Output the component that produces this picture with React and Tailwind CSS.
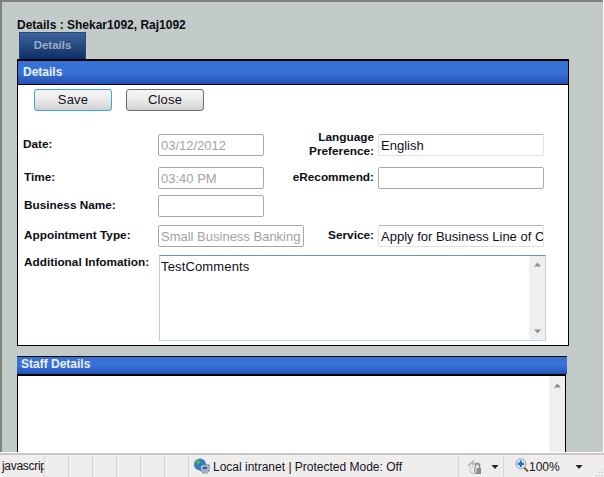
import React from "react";

const font = { fontFamily: '"Liberation Sans", Arial, sans-serif' };

function Arrow({ dir }) {
  return (
    <svg width="9" height="5" viewBox="0 0 9 5" className="block">
      <path d={dir === "up" ? "M4.5 0.5L8 4.5H1Z" : "M1 0.5H8L4.5 4.5Z"} fill="#8f8f8f" />
    </svg>
  );
}

function Scrollbar() {
  return (
    <div className="w-[16px] h-full bg-[#efefef] flex flex-col items-center justify-between pt-[6px] pb-[6px] shrink-0">
      <Arrow dir="up" />
      <Arrow dir="down" />
    </div>
  );
}

function Field({ value = "", disabled, w = "w-[106px]", light }) {
  return (
    <div
      className={`${w} h-[22px] rounded-[2px] border overflow-hidden whitespace-nowrap pl-[2px] pt-[1px] text-[13px] leading-[20px] bg-white shrink-0 ${
        disabled
          ? "border-[#a8a8a8] text-[#a3a3a3]"
          : light
            ? "border-[#b4b4b4] border-b-[#dfe3e8] border-r-[#dfe3e8] border-l-[#dfe3e8] text-[#10101a]"
            : "border-[#aaaaaa] text-[#10101a]"
      }`}
    >
      {value}
    </div>
  );
}

function Label({ children, className = "" }) {
  return <div className={`text-[11.8px] leading-[14px] font-bold text-[#0c0c14] mb-[2px] ${className}`}>{children}</div>;
}

function Btn({ children, focus }) {
  return (
    <div
      className={`w-[78px] h-[22px] rounded-[3px] border flex items-center justify-center text-[13px] tracking-[0.2px] text-[#111] bg-gradient-to-b from-[#f4f4f4] via-[#ebebeb] to-[#cfcfcf] ${
        focus ? "border-[#3aa8cf]" : "border-[#6f6f6f]"
      }`}
    >
      {children}
    </div>
  );
}

function Row({ mt = "", left, leftClass = "", field, right, rightW = "w-[114px]", rightField }) {
  return (
    <div className={`flex items-center ${mt}`}>
      <div className="w-[140px] shrink-0 pl-[6px]">
        <Label className={leftClass}>{left}</Label>
      </div>
      {field}
      {right !== undefined && (
        <>
          <div className={`${rightW} shrink-0 text-right pr-[4px]`}>
            <Label>{right}</Label>
          </div>
          {rightField}
        </>
      )}
    </div>
  );
}

export default function App() {
  return (
    <div className="w-[604px] h-[477px] overflow-hidden bg-white flex flex-col" style={font}>
      <div className="h-[452px] shrink-0 overflow-hidden bg-[#c2cbc7] border-t-2 border-l-2 border-[#808080] mr-[1px] pl-[15px] pr-[34px] flex flex-col">
        <div className="mt-[16px] h-[14px] text-[12px] leading-[15px] font-bold text-[#0c0c14] shrink-0">Details : Shekar1092, Raj1092</div>

        <div className="ml-[2px] w-[67px] h-[27px] border border-[#244a80] border-b-0 bg-gradient-to-b from-[#3f639b] to-[#0b2f66] flex items-center justify-center text-[11.5px] font-bold text-[#9cadc8] shrink-0">
          Details
        </div>

        <div className="w-[552px] h-[287px] shrink-0 border border-t-2 border-black bg-white flex flex-col">
          <div className="h-[23px] shrink-0 pl-[5px] bg-gradient-to-b from-[#3570d4] via-[#3872d6] to-[#2450b6] text-[12px] leading-[23px] font-bold text-[#e8f0fb]">
            Details
          </div>
          <div className="h-px bg-black shrink-0" />
          <div className="flex gap-[14px] pl-[16px] mt-[4px] shrink-0">
            <Btn focus>Save</Btn>
            <Btn>Close</Btn>
          </div>
          <div className="shrink-0 pt-[19px]">
            <Row
              left="Date:"
              leftClass="-ml-px"
              field={<Field value="03/12/2012" disabled />}
              right={<>Language<br />Preference:</>}
              rightField={<Field value="English" w="w-[166px]" light />}
            />
            <Row mt="mt-[7px]" left="Time:" field={<Field value="03:40 PM" disabled />} right="eRecommend:" rightField={<Field w="w-[166px]" />} />
            <Row mt="mt-[6px]" left="Business Name:" field={<Field />} />
            <Row
              mt="mt-[8px]"
              left="Appointment Type:"
              field={<Field value="Small Business Banking" disabled w="w-[146px]" />}
              right="Service:"
              rightW="w-[74px]"
              rightField={<Field value="Apply for Business Line of Credit" w="w-[166px]" light />}
            />
            <div className="flex items-start mt-[8px]">
              <div className="w-[141px] shrink-0 pl-[6px]">
                <Label>Additional Infomation:</Label>
              </div>
              <div className="w-[387px] h-[86px] border border-[#bcd6ea] border-t-[#6b97bd] border-l-[#b5cfe4] flex justify-between bg-white">
                <div className="pl-[1px] pt-[3px] text-[13px] leading-[16px] tracking-[0.15px] text-[#10101a]">TestComments</div>
                <Scrollbar />
              </div>
            </div>
          </div>
        </div>

        <div className="mt-[10px] w-[550px] shrink-0 border-t border-black h-[18px]">
          <div className="h-[17px] pl-[4px] bg-gradient-to-b from-[#3570d4] via-[#3872d6] to-[#2450b6] text-[12px] leading-[15px] font-bold text-[#e8f0fb]">
            Staff Details
          </div>
        </div>
        <div className="w-[549px] flex-1 border-t-2 border-x border-black bg-white flex justify-end">
          <div className="w-[16px] h-full bg-[#efefef] flex justify-center pt-[7px]">
            <Arrow dir="up" />
          </div>
        </div>
      </div>

      <div className="h-px bg-white shrink-0" />
      <div className="h-[2px] bg-[#c8c8c8] shrink-0" />
      <div className="flex-1 bg-[#f0eded] flex items-center pt-[1px] text-[12px] text-[#14141e] relative">
        {[
          ["w-[45px]", "javascrip"],
          ["w-[24px]", ""],
          ["w-[24px]", ""],
          ["w-[24px]", ""],
          ["w-[24px]", ""],
          ["w-[24px]", ""],
          ["w-[24px]", ""],
        ].map(([w, t], i) => (
          <div key={i} className={`${w} h-[21px] border-r border-[#d8d6d6] overflow-hidden whitespace-nowrap leading-[21px] pl-[2px] tracking-[-0.3px] shrink-0`}>
            {t}
          </div>
        ))}
        <div className="w-[270px] flex items-center pl-[4px] h-[21px] border-r border-[#d8d6d6] shrink-0">
          <svg width="17" height="16" viewBox="0 0 17 16" className="shrink-0 -mt-[2px]">
            <circle cx="7" cy="6.5" r="6" fill="#2f7fc9" />
            <path d="M3 2.5C5 1 7 2 7.5 3.5S6 6.5 4.5 6 2 4 3 2.5ZM8 8c2-.5 3.5.5 3 2.5S8 13 7.5 11.5 6.5 8.5 8 8Z" fill="#58b04a" />
            <rect x="8" y="7" width="8" height="6" fill="#e6eef8" stroke="#5a6f8c" />
            <rect x="9.5" y="8.5" width="5" height="3" fill="#2c62b8" />
            <rect x="9" y="14" width="6" height="1.5" fill="#9aa6b4" />
          </svg>
          <span className="ml-[3px] whitespace-nowrap text-[12px]">Local intranet | Protected Mode: Off</span>
        </div>
        <div className="w-[45px] flex items-center pl-[8px] h-[21px] border-r border-[#d8d6d6] shrink-0">
          <svg width="16" height="16" viewBox="0 0 16 16" className="shrink-0">
            <path d="M1 7L6 2.5V5C9 4 12 4.5 13 7" fill="none" stroke="#b9b9b9" strokeWidth="2" />
            <path d="M8.5 9V6.5a2 2 0 0 1 4 0V9" fill="none" stroke="#8a8a8a" strokeWidth="1.3" />
            <rect x="7" y="9" width="7" height="6" fill="#8c8c8c" />
            <circle cx="6" cy="11" r="3" fill="none" stroke="#d4d4d4" strokeWidth="1.5" />
          </svg>
          <svg width="8" height="4" viewBox="0 0 8 4" className="ml-[8px] shrink-0"><path d="M0.5 0H7.5L4 4Z" fill="#222" /></svg>
        </div>
        <div className="flex items-center pl-[11px] shrink-0">
          <svg width="14" height="15" viewBox="0 0 14 15" className="shrink-0 -mt-[2px]">
            <path d="M9 9.5L13 13.5" stroke="#8a5a30" strokeWidth="2.2" />
            <circle cx="5.8" cy="5.8" r="5" fill="#e8eef6" stroke="#8fa0b3" />
            <path d="M5.8 2.5V9M2.6 5.8H9" stroke="#1d6fd0" strokeWidth="2.2" />
          </svg>
          <span className="text-[12px] whitespace-nowrap">100%</span>
          <svg width="8" height="4" viewBox="0 0 8 4" className="ml-[15px] shrink-0"><path d="M0.5 0H7.5L4 4Z" fill="#222" /></svg>
        </div>
        <svg width="8" height="8" viewBox="0 0 8 8" className="absolute right-0 bottom-0">
          <path d="M6 0h1v1H6ZM3 3h1v1H3ZM6 3h1v1H6ZM0 6h1v1H0ZM3 6h1v1H3ZM6 6h1v1H6Z" fill="#bdbdbd" />
        </svg>
      </div>
    </div>
  );
}
